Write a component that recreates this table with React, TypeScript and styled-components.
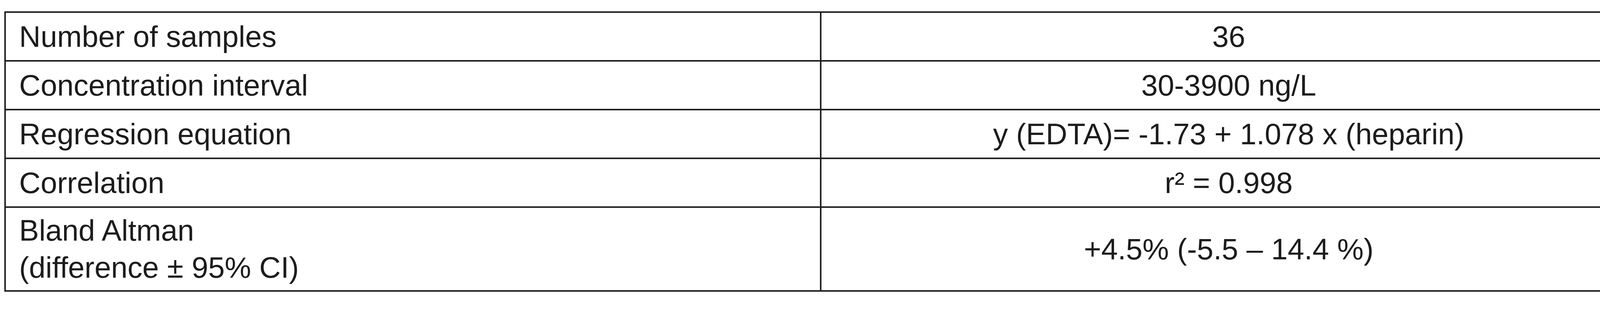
import React from "react";
import styled, { createGlobalStyle } from "styled-components";

const GlobalStyle = createGlobalStyle`
  html, body {
    margin: 0;
    padding: 0;
    background: #ffffff;
  }
  body {
    font-family: "Liberation Sans", Arial, Helvetica, sans-serif;
    color: #1c1c1c;
  }
`;

const Page = styled.div`
  padding: 29px 0 0 11px;
  width: 4261px;
  height: 800px;
  box-sizing: border-box;
  background: #ffffff;
`;

const Table = styled.div`
  display: grid;
  grid-template-columns: 2084px 2085px;
  gap: 4px;
  padding: 4px;
  width: max-content;
  background: #212121;
`;

const Cell = styled.div<{ $align: "left" | "center"; $tall?: boolean }>`
  background: #ffffff;
  box-sizing: border-box;
  min-height: ${(p) => (p.$tall ? "211px" : "121px")};
  padding: ${(p) => (p.$tall ? "10px" : "10px")} ${(p) => (p.$align === "left" ? "34px" : "20px")} 11px;
  display: flex;
  flex-direction: column;
  justify-content: center;
  align-items: ${(p) => (p.$align === "left" ? "flex-start" : "center")};
  font-family: "Liberation Sans", Arial, Helvetica, sans-serif;
  font-size: 76px;
  line-height: 95px;
  color: #1c1c1c;
  white-space: nowrap;
`;

const Line = styled.span`
  display: block;
`;

type Row = { label: string[]; value: string };

const rows: Row[] = [
  { label: ["Number of samples"], value: "36" },
  { label: ["Concentration interval"], value: "30-3900 ng/L" },
  { label: ["Regression equation"], value: "y (EDTA)= -1.73 + 1.078 x (heparin)" },
  { label: ["Correlation"], value: "r\u00B2 = 0.998" },
  { label: ["Bland Altman", "(difference \u00B1 95% CI)"], value: "+4.5% (-5.5 \u2013 14.4 %)" },
];

export default function App() {
  return (
    <>
      <GlobalStyle />
      <Page>
        <Table>
          {rows.map((r, i) => {
            const tall = r.label.length > 1;
            return (
              <React.Fragment key={i}>
                <Cell $align="left" $tall={tall}>
                  {r.label.map((l, j) => (
                    <Line key={j}>{l}</Line>
                  ))}
                </Cell>
                <Cell $align="center" $tall={tall}>
                  <Line>{r.value}</Line>
                </Cell>
              </React.Fragment>
            );
          })}
        </Table>
      </Page>
    </>
  );
}
